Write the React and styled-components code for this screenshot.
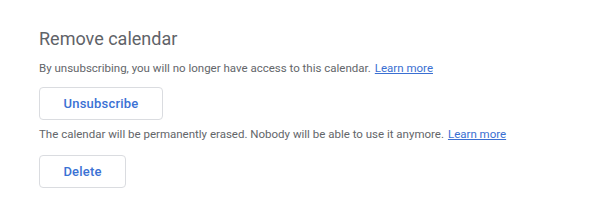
import styled, { createGlobalStyle } from "styled-components";

const GlobalStyle = createGlobalStyle`
  body {
    margin: 0;
    background: #ffffff;
    font-family: Roboto, "Liberation Sans", Arial, sans-serif;
  }
`;

const Section = styled.section`
  padding: 28px 39px;
  display: flex;
  flex-direction: column;
  align-items: flex-start;
`;

const Title = styled.h2`
  margin: 0 0 10px;
  font-size: 18px;
  font-weight: 400;
  color: #5f6368;
  line-height: 22px;
`;

const Note = styled.p`
  margin: 0;
  font-size: 11.5px;
  line-height: 16px;
  color: #63666a;
`;

const Link = styled.a`
  color: #3a6fd2;
  text-decoration: underline;
  margin-left: 4px;
  cursor: pointer;
`;

const Button = styled.button`
  margin: ${(p) => p.$margin || "0"};
  width: ${(p) => p.$width}px;
  height: 33px;
  background: #fff;
  border: 1px solid #dadce0;
  border-radius: 4px;
  color: #3b72d4;
  font-family: inherit;
  font-size: 13px;
  font-weight: 500;
  letter-spacing: 0.2px;
  cursor: pointer;
`;

export default function App() {
  return (
    <>
      <GlobalStyle />
      <Section>
        <Title>Remove calendar</Title>
        <Note>
          By unsubscribing, you will no longer have access to this calendar.
          <Link>Learn more</Link>
        </Note>
        <Button $width={124} $margin="11px 0 6px">
          Unsubscribe
        </Button>
        <Note>
          The calendar will be permanently erased. Nobody will be able to use it
          anymore.
          <Link>Learn more</Link>
        </Note>
        <Button $width={87} $margin="13px 0 0">
          Delete
        </Button>
      </Section>
    </>
  );
}
